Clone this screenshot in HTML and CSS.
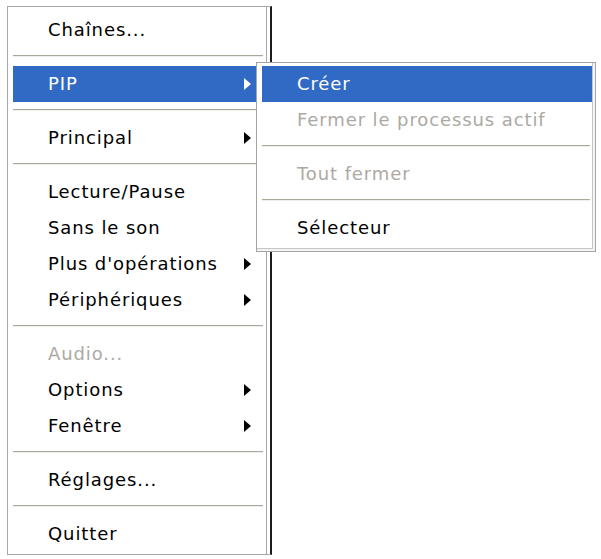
FILE: index.html
```html
<!DOCTYPE html>
<html lang="fr">
<head>
  <meta charset="UTF-8" />
  <title>Menu</title>
  <link rel="stylesheet" href="styles.css">
</head>
<body>
  <div class="stage">
    <ul class="menu main-menu">
      <li class="item">Chaînes...</li>
      <li class="sep"></li>
      <li class="item active sub">PIP</li>
      <li class="sep"></li>
      <li class="item sub">Principal</li>
      <li class="sep"></li>
      <li class="item">Lecture/Pause</li>
      <li class="item">Sans le son</li>
      <li class="item sub">Plus d'opérations</li>
      <li class="item sub">Périphériques</li>
      <li class="sep"></li>
      <li class="item disabled">Audio...</li>
      <li class="item sub">Options</li>
      <li class="item sub">Fenêtre</li>
      <li class="sep"></li>
      <li class="item">Réglages...</li>
      <li class="sep"></li>
      <li class="item">Quitter</li>
    </ul>

    <ul class="menu sub-menu">
      <li class="item active">Créer</li>
      <li class="item disabled">Fermer le processus actif</li>
      <li class="sep"></li>
      <li class="item disabled">Tout fermer</li>
      <li class="sep"></li>
      <li class="item">Sélecteur</li>
    </ul>
  </div>
</body>
</html>
```

FILE: styles.css
```css
body {
  margin: 0;
  background: #fff;
  font-family: 'DejaVu Sans', Tahoma, sans-serif;
  font-size: 18px;
  letter-spacing: 0.9px;
  color: #000;
}
.stage {
  position: relative;
  width: 594px;
  height: 553px;
  padding: 6px 0 0 7px;
}
.menu {
  list-style: none;
  margin: 0;
  background: #fff;
}
.main-menu {
  width: 252px;
  padding: 5px 5px 2px 5px;
  border: 1px solid #a8a8a8;
  border-right: 2px solid #1c1c1c;
  box-shadow: inset -3px 0 0 #fff, inset -4px 0 0 #a8a8a8;
}
.sub-menu {
  position: absolute;
  left: 256px;
  top: 62px;
  width: 330px;
  padding: 3px 3px 5px 5px;
  border: 1px solid #a4a4a4;
  box-shadow: inset -2px -2px 0 #f4f4f4, inset -3px -3px 0 #c4c4c4;
}
.item {
  position: relative;
  height: 36px;
  line-height: 36px;
  padding-left: 35px;
  white-space: nowrap;
}
.item.active {
  background: #316ac5;
  color: #fff;
}
.item.disabled {
  color: #aca9a4;
}
.sub::after {
  content: "";
  position: absolute;
  right: 14px;
  top: 12px;
  border-style: solid;
  border-width: 6px 0 6px 7px;
  border-color: transparent transparent transparent #000;
}
.sub.active::after {
  border-left-color: #fff;
}
.sep {
  height: 18px;
  position: relative;
}
.sep::before {
  content: "";
  position: absolute;
  left: 0;
  right: 2px;
  top: 7px;
  height: 1px;
  background: #aca899;
  box-shadow: 0 1px 0 #eee;
}
```
